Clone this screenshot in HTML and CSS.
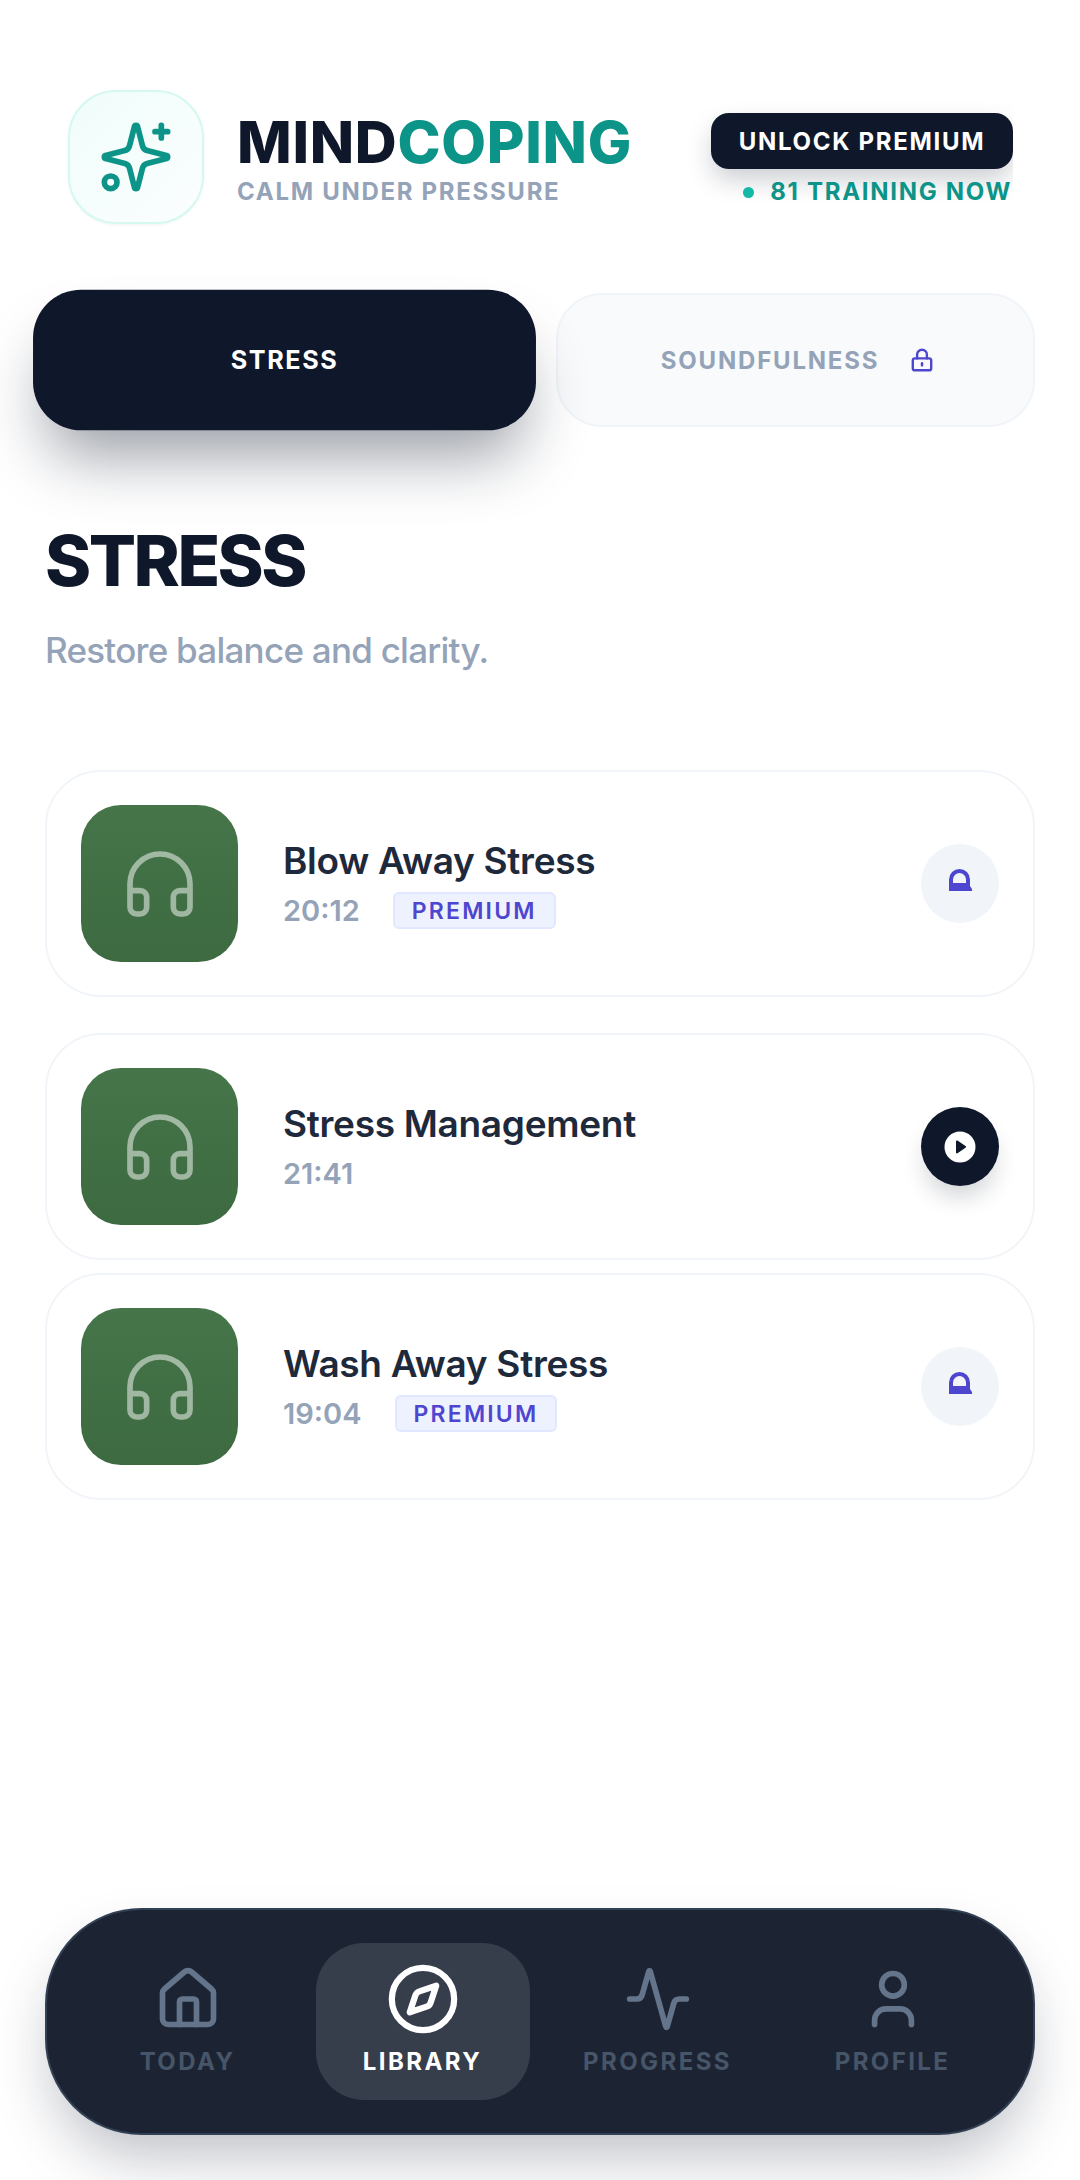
FILE: index.html
```html
<!DOCTYPE html>
<html lang="en">
<head>
<meta charset="utf-8">
<title>MindCoping</title>
<link rel="stylesheet" href="styles.css">
</head>
<body>
<div class="page">
  <header class="header">
    <div class="brand">
      <div class="logo">
        <svg class="logo-icon" viewBox="0 0 24 24"><path d="M9.937 15.5A2 2 0 0 0 8.5 14.063l-6.135-1.582a.5.5 0 0 1 0-.962L8.5 9.936A2 2 0 0 0 9.937 8.5l1.582-6.135a.5.5 0 0 1 .963 0L14.063 8.5A2 2 0 0 0 15.5 9.937l6.135 1.581a.5.5 0 0 1 0 .964L15.5 14.063a2 2 0 0 0-1.437 1.437l-1.582 6.135a.5.5 0 0 1-.963 0z"/><path d="M20 2v4"/><path d="M22 4h-4"/><circle cx="4" cy="20" r="2"/></svg>
      </div>
      <div class="brand-text">
        <div class="brand-name">MIND<span class="brand-accent">COPING</span></div>
        <div class="brand-tag">CALM UNDER PRESSURE</div>
      </div>
    </div>
    <div class="status">
      <div class="unlock">UNLOCK PREMIUM</div>
      <div class="training"><span class="dot"></span>81 TRAINING NOW</div>
    </div>
  </header>

  <nav class="tabs">
    <div class="tab tab-active">STRESS</div>
    <div class="tab tab-locked">SOUNDFULNESS
      <svg class="tab-lock" viewBox="0 0 24 24"><rect x="3.5" y="10.5" width="17" height="11" rx="2"/><path d="M7.5 10.5V7a4.5 4.5 0 0 1 9 0v3.5"/><path d="M12 15v2"/></svg>
    </div>
  </nav>

  <section class="intro">
    <h1 class="title">STRESS</h1>
    <p class="subtitle">Restore balance and clarity.</p>
  </section>

  <section class="list">
    <article class="card">
      <div class="thumb"><svg class="phones" viewBox="0 0 24 24"><path d="M3 14h3a2 2 0 0 1 2 2v3a2 2 0 0 1-2 2H5a2 2 0 0 1-2-2v-7a9 9 0 0 1 18 0v7a2 2 0 0 1-2 2h-1a2 2 0 0 1-2-2v-3a2 2 0 0 1 2-2h3"/></svg></div>
      <div class="info">
        <div class="name">Blow Away Stress</div>
        <div class="meta"><span class="time">20:12</span><span class="badge">PREMIUM</span></div>
      </div>
      <div class="action action-lock"><svg class="arch" viewBox="0 0 24 22"><path fill-rule="evenodd" d="M1 22V10.5a10.5 10.5 0 0 1 21 0V17l2 3v2zM5 14h13v-3.500a6.500 6.500 0 0 0-13 0z"/></svg></div>
    </article>
    <article class="card card-second">
      <div class="thumb"><svg class="phones" viewBox="0 0 24 24"><path d="M3 14h3a2 2 0 0 1 2 2v3a2 2 0 0 1-2 2H5a2 2 0 0 1-2-2v-7a9 9 0 0 1 18 0v7a2 2 0 0 1-2 2h-1a2 2 0 0 1-2-2v-3a2 2 0 0 1 2-2h3"/></svg></div>
      <div class="info">
        <div class="name">Stress Management</div>
        <div class="meta"><span class="time">21:41</span></div>
      </div>
      <div class="action action-play"><svg class="play" viewBox="0 0 32 32"><circle cx="16" cy="16" r="15.500"/><path class="play-tri" d="M12 10.500a1 1 0 0 1 1.500-.9l8 5.500a1 1 0 0 1 0 1.700l-8 5.500a1 1 0 0 1-1.500-.9z"/></svg></div>
    </article>
    <article class="card card-third">
      <div class="thumb"><svg class="phones" viewBox="0 0 24 24"><path d="M3 14h3a2 2 0 0 1 2 2v3a2 2 0 0 1-2 2H5a2 2 0 0 1-2-2v-7a9 9 0 0 1 18 0v7a2 2 0 0 1-2 2h-1a2 2 0 0 1-2-2v-3a2 2 0 0 1 2-2h3"/></svg></div>
      <div class="info">
        <div class="name">Wash Away Stress</div>
        <div class="meta"><span class="time">19:04</span><span class="badge">PREMIUM</span></div>
      </div>
      <div class="action action-lock"><svg class="arch" viewBox="0 0 24 22"><path fill-rule="evenodd" d="M1 22V10.5a10.5 10.5 0 0 1 21 0V17l2 3v2zM5 14h13v-3.500a6.500 6.500 0 0 0-13 0z"/></svg></div>
    </article>
  </section>

  <nav class="bottom">
    <div class="bottom-item">
      <svg class="nav-icon" viewBox="0 0 24 24"><path d="M15 21v-8a1 1 0 0 0-1-1h-4a1 1 0 0 0-1 1v8"/><path d="M3 10a2 2 0 0 1 .709-1.528l7-5.999a2 2 0 0 1 2.582 0l7 5.999A2 2 0 0 1 21 10v9a2 2 0 0 1-2 2H5a2 2 0 0 1-2-2z"/></svg>
      <span class="nav-label">TODAY</span>
    </div>
    <div class="bottom-item bottom-active">
      <svg class="nav-icon" viewBox="0 0 24 24"><path d="m16.240 7.760-1.804 5.411a2 2 0 0 1-1.265 1.265L7.760 16.240l1.804-5.411a2 2 0 0 1 1.265-1.265z"/><circle cx="12" cy="12" r="10"/></svg>
      <span class="nav-label">LIBRARY</span>
    </div>
    <div class="bottom-item">
      <svg class="nav-icon" viewBox="0 0 24 24"><path d="M22 12h-2.480a2 2 0 0 0-1.930 1.460l-2.350 8.360a.25.25 0 0 1-.480 0L9.240 2.180a.25.25 0 0 0-.480 0l-2.350 8.360A2 2 0 0 1 4.490 12H2"/></svg>
      <span class="nav-label">PROGRESS</span>
    </div>
    <div class="bottom-item">
      <svg class="nav-icon" viewBox="0 0 24 24"><path d="M5.500 21v-1.500a4 4 0 0 1 4-4h5a4 4 0 0 1 4 4V21"/><circle cx="12" cy="7" r="4"/></svg>
      <span class="nav-label">PROFILE</span>
    </div>
  </nav>
</div>
</body>
</html>
```
FILE: styles.css
```css
* { box-sizing: border-box; }
html, body { margin: 0; padding: 0; background: #fff; }
body { font-family: "Inter", "Liberation Sans", sans-serif; overflow: hidden; }
.page { width: 1080px; height: 2180px; display: flex; flex-direction: column; overflow: hidden; }

.header { display: flex; justify-content: space-between; align-items: flex-start; padding: 90px 67px 0 68px; height: 224px; }
.brand { display: flex; align-items: flex-start; gap: 33px; }
.logo { width: 136px; height: 134px; border-radius: 48px; background: linear-gradient(135deg, #f0fdfa, #fbfefe); border: 2px solid #d5f8f0; display: flex; align-items: center; justify-content: center; box-shadow: 0 1px 3px rgba(15,23,42,.05); }
.logo-icon { width: 76px; height: 76px; fill: none; stroke: #0d9488; stroke-width: 1.8; stroke-linecap: round; stroke-linejoin: round; }
.brand-text { padding-top: 20px; }
.brand-name { font-size: 58px; line-height: 64px; font-weight: 800; color: #0f172a; letter-spacing: .7px; }
.brand-accent { color: #0d9488; }
.brand-tag { font-size: 24px; line-height: 30px; font-weight: 700; color: #94a3b8; letter-spacing: 1.7px; margin-top: 3px; }

.status { display: flex; flex-direction: column; align-items: flex-end; padding-top: 23px; }
.unlock { position: relative; flex: none; width: 302px; height: 56px; border-radius: 18px; background: #0f172a; color: #fff; font-size: 24px; font-weight: 700; letter-spacing: 1.7px; display: flex; align-items: center; justify-content: center; }
.unlock::before { content: ""; position: absolute; inset: 0; border-radius: inherit; box-shadow: 0 12px 26px -2px rgba(15,23,42,.22); clip-path: inset(-40px 0 -34px -36px); }
.training { position: relative; flex: none; display: flex; align-items: center; font-size: 24px; line-height: 22px; font-weight: 700; color: #0d9488; letter-spacing: 1.7px; margin-top: 12px; padding-right: 1px; }
.dot { width: 11px; height: 11px; border-radius: 50%; background: #14b8a6; margin-right: 16px; }

.tabs { display: grid; grid-template-columns: 1fr 1fr; gap: 32px; padding: 0 45px; margin-top: 69px; }
.tab { height: 134px; border-radius: 46px; display: flex; align-items: center; justify-content: center; font-size: 24px; font-weight: 700; letter-spacing: 1.8px; }
.tab-active { background: #0f172a; color: #fff; letter-spacing: 1.5px; transform: scale(1.05); box-shadow: 0 38px 60px -14px rgba(15,23,42,.42); }
.tab-locked { background: #f8fafc; border: 2px solid #f1f5f9; color: #94a3b8; gap: 30px; padding-left: 5px; }
.tab-lock { width: 26px; height: 26px; fill: none; stroke: #4f46cf; stroke-width: 2.2; stroke-linecap: round; stroke-linejoin: round; }

.intro { padding: 0 45px; margin-top: 92px; }
.title { margin: 0; font-size: 70px; line-height: 84px; font-weight: 800; color: #0f172a; letter-spacing: -2.5px; }
.subtitle { margin: 25px 0 0; font-size: 35px; line-height: 44px; font-weight: 500; color: #94a3b8; letter-spacing: -.75px; }

.list { display: flex; flex-direction: column; padding: 0 45px; margin-top: 98px; }
.card { height: 227px; border: 2px solid #f1f5f9; border-radius: 56px; padding: 0 34px; display: flex; align-items: center; background: #fff; }
.card-second { margin-top: 36px; }
.card-third { margin-top: 13px; }
.thumb { width: 157px; height: 157px; border-radius: 40px; background: linear-gradient(180deg, #46754a, #3d6a40); display: flex; align-items: center; justify-content: center; flex: none; }
.phones { width: 80px; height: 80px; fill: none; stroke: rgba(255,255,255,.5); stroke-width: 1.7; stroke-linecap: round; stroke-linejoin: round; }
.info { margin-left: 45px; flex: 1; }
.name { font-size: 37px; line-height: 48px; font-weight: 600; color: #1e293b; letter-spacing: -.3px; }
.meta { display: flex; align-items: center; height: 40px; margin-top: 6px; gap: 33px; }
.time { font-size: 29px; font-weight: 600; color: #94a3b8; }
.badge { height: 37px; padding: 1px 17px 0; border: 2px solid #e0e7ff; border-radius: 6px; background: #eef2ff; color: #4f46cf; font-size: 23px; font-weight: 600; letter-spacing: 2.2px; display: flex; align-items: center; }
.action { width: 78px; height: 79px; border-radius: 50%; flex: none; display: flex; align-items: center; justify-content: center; }
.action-lock { background: #f1f5f9; }
.action-play { background: #0f172a; box-shadow: 0 15px 25px -5px rgba(15,23,42,.2); }
.arch { width: 24px; height: 22px; fill: #4f46cf; margin-bottom: 8px; }
.play { width: 32px; height: 32px; fill: #fff; }
.play-tri { fill: #0f172a; }

.bottom { margin: auto 45px 45px; height: 227px; border: 2px solid #334155; border-radius: 96px; background: #1c2433; padding: 0 23px; display: grid; grid-template-columns: repeat(4, 1fr); align-items: center; justify-items: center; box-shadow: 0 30px 60px -10px rgba(15,23,42,.28); }
.bottom-item { width: 214px; height: 157px; border-radius: 48px; display: flex; flex-direction: column; align-items: center; justify-content: flex-start; padding-top: 22px; }
.bottom-active { background: rgba(255,255,255,.12); }
.nav-icon { width: 68px; height: 68px; fill: none; stroke: #64748b; stroke-width: 2; stroke-linecap: round; stroke-linejoin: round; }
.nav-label { font-size: 24px; line-height: 30px; font-weight: 700; letter-spacing: 2.4px; color: #475569; margin-top: 14px; }
.bottom-active .nav-icon { stroke: #fff; transform: scale(1.1); }
.bottom-active .nav-label { color: #fff; }
```
